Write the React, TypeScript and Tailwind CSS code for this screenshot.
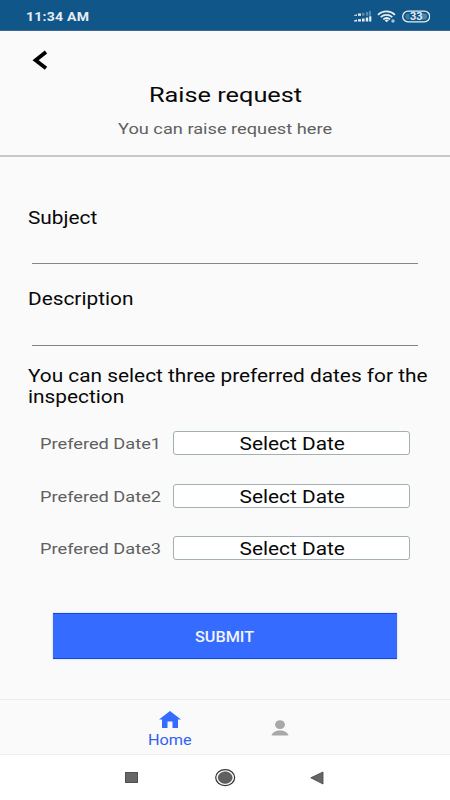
import type { ReactNode } from "react";

function StatusBar() {
  return (
    <div className="flex h-[31px] items-center border-b border-[#3d6690] bg-[#115688] pt-[3px] pl-[26px] pr-5 text-[#e6eef5]">
      <span className="origin-left scale-x-[1.17] text-[12px] leading-4 font-bold tracking-[0.2px]">11:34 AM</span>
      <svg className="ml-auto" width="78" height="14" viewBox="0 0 78 14" fill="none">
        <g fill="#e6eef5">
          <path d="M2 5.200l3-1v1.600H2zM6 3.600h3v2.200H6z" />
          <path d="M10 2.800h2.500v3H10zM14 2h2.300v3.800H14zM17 1h2v4.800h-2z" opacity="0.35" />
          <path d="M2 10.400l3-.8v2H2zM6 9.200h3v2.400H6zM10 8.400h2.600v3.200H10zM13.800 7.400h2.400v4.200h-2.400zM17.200 6.200h2.100v5.400h-2.100z" />
        </g>
        <g stroke="#e6eef5" strokeWidth="1.800">
          <path d="M26 4.800c4.800-4.500 12.200-4.500 17 0M28.700 7.200c3.400-3 8.200-3 11.600 0M31.300 9.400c2-1.700 4.800-1.700 6.800 0" />
        </g>
        <path d="M32.600 10.200c1.300-.8 2.900-.8 4.200 0l-2.100 2z" fill="#e6eef5" />
        <circle cx="41" cy="11" r="1.700" fill="#a9c3d6" />
        <rect x="50.700" y="1.200" width="27" height="10.600" rx="5.300" stroke="#e6eef5" strokeWidth="1.300" />
        <path d="M56.500 3.400h1v6.200h-1a3.100 3.100 0 0 1 0-6.200z" fill="#3f789f" />
        <path d="M69 3.400h3a3.100 3.100 0 0 1 0 6.200h-3z" fill="#4e84aa" />
        <text x="58" y="10.100" fontSize="10" fontWeight="700" fill="#e6eef5" textLength="12.500" lengthAdjust="spacingAndGlyphs">33</text>
      </svg>
    </div>
  );
}

function Label({ children }: { children: ReactNode }) {
  return <div className="w-max origin-left scale-x-[1.19] text-[17.5px] leading-[20.5px] text-[#080808]">{children}</div>;
}

function DateRow({ n }: { n: number }) {
  return (
    <div className="flex h-6 items-center">
      <div className="w-[133px]">
        <div className="mt-0.5 w-max origin-left scale-x-[1.175] text-[15.5px] leading-5 text-[#606060]">Prefered Date{n}</div>
      </div>
      <button className="flex h-6 w-[237px] items-center justify-center rounded-[3px] border border-[#a3b0b2] bg-white">
        <span className="mt-0.5 ml-px scale-x-[1.19] text-[17.5px] leading-5 text-[#080808]">Select Date</span>
      </button>
    </div>
  );
}

export default function App() {
  return (
    <div className="flex h-[800px] w-[450px] flex-col overflow-hidden bg-[#fafafa] font-['Roboto',sans-serif]">
      <StatusBar />
      <header className="flex h-[126px] flex-col items-center border-b-2 border-[#c8c8c8]">
        <button className="mt-[19px] ml-8 h-5 w-4 self-start">
          <svg width="16" height="20" viewBox="0 0 16 20" fill="none" stroke="#000" strokeWidth="3.8">
            <path d="M14 2L3.600 10.200l10.400 8.100" />
          </svg>
        </button>
        <h1 className="mt-[13px] ml-px scale-x-[1.205] text-[21px] leading-6 text-[#080808]">Raise request</h1>
        <p className="mt-3 scale-x-[1.175] text-[15.5px] leading-5 text-[#606060]">You can raise request here</p>
      </header>

      <main className="flex flex-1 flex-col">
        <div className="mt-[51px] h-5 pl-[28px]"><Label>Subject</Label></div>
        <div className="mx-8 mt-[35px] border-b border-[#858585]" />
        <div className="mt-[25px] h-5 pl-[28px]"><Label>Description</Label></div>
        <div className="mx-8 mt-9 border-b border-[#858585]" />
        <div className="mt-5 h-10 pl-[28px]">
          <Label>You can select three preferred dates for the<br />inspection</Label>
        </div>
        <div className="mt-[25px] flex flex-col gap-[28.7px] pl-10">
          <DateRow n={1} />
          <DateRow n={2} />
          <DateRow n={3} />
        </div>
        <button className="mt-[52.6px] ml-[53px] flex h-[46px] w-[344px] items-center justify-center border-y border-[#0b49f3] bg-[#356bff] shadow-[0_0_2px_#00000033]">
          <span className="mt-0.5 scale-x-[1.16] text-[14px] leading-5 font-medium text-[#f2f5ff]">SUBMIT</span>
        </button>
      </main>

      <nav className="flex h-[56px] border-y border-[#ededed] pl-[115px]">
        <div className="flex w-[110px] flex-col items-center pt-[11px] text-[#2f62f5]">
          <svg width="22" height="17" viewBox="0 0 22 17" fill="#356bff">
            <path d="M11 0L0 8.500h3V17h5.500v-6.500h5V17H19V8.500h3z" />
          </svg>
          <span className="mt-[2px] scale-x-[1.16] text-[14px] leading-5">Home</span>
        </div>
        <div className="flex w-[110px] justify-center pt-5">
          <svg width="18" height="16" viewBox="0 0 18 16" fill="#a8a8a8">
            <ellipse cx="9" cy="4.600" rx="5" ry="4.300" />
            <path d="M.5 15.400c1-3 4.500-4.800 8.500-4.800s7.500 1.800 8.500 4.800z" />
          </svg>
        </div>
      </nav>
      <div className="flex h-[45px] items-center bg-white pl-[125px]">
        <div className="h-[11px] w-[13px] border border-[#505050] bg-[#666]" />
        <svg className="ml-[77px]" width="21" height="18" viewBox="0 0 21 18">
          <ellipse cx="10.200" cy="8.600" rx="9.500" ry="8" fill="#fff" stroke="#333" strokeWidth="1.200" />
          <ellipse cx="10.200" cy="8.600" rx="7" ry="5.800" fill="#606060" stroke="#444" strokeWidth=".6" />
        </svg>
        <svg className="ml-[74px]" width="14" height="14" viewBox="0 0 14 14">
          <path d="M.8 6.800L13 1v12z" fill="#666" stroke="#444" strokeWidth=".8" />
        </svg>
      </div>
    </div>
  );
}
